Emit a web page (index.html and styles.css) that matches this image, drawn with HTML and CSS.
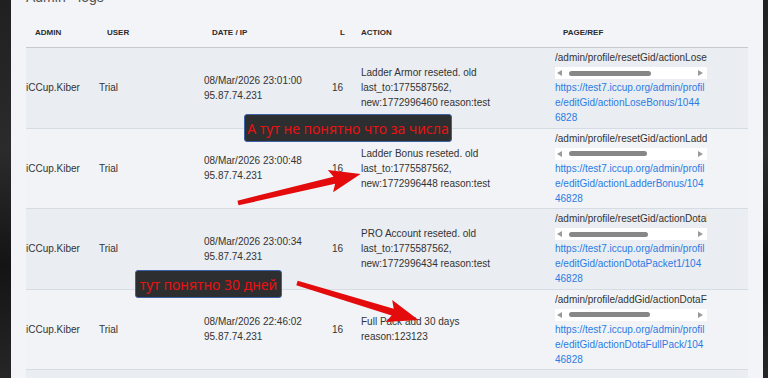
FILE: index.html
```html
<!DOCTYPE html>
<html lang="ru">
<head>
<meta charset="utf-8">
<title>Admin - logs</title>
<link rel="stylesheet" href="styles.css">
</head>
<body>
<div class="panel">
  <h1 class="title">Admin - logs</h1>
  <div class="table">
    <div class="row head">
      <div class="h">Admin</div>
      <div class="h">User</div>
      <div class="h">Date / IP</div>
      <div class="h">L</div>
      <div class="h h-action">Action</div>
      <div class="h">Page/Ref</div>
    </div>

    <div class="row data odd">
      <div class="c">iCCup.Kiber</div>
      <div class="c">Trial</div>
      <div class="c">08/Mar/2026 23:01:00<br>95.87.74.231</div>
      <div class="c">16</div>
      <div class="c action">Ladder Armor reseted. old last_to:1775587562, new:1772996460 reason:test</div>
      <div class="c page">
        <div class="path">/admin/profile/resetGid/actionLoseBonus/10446828</div>
        <div class="sbar"><span class="arr arr-l"></span><span class="thumb" style="width:82px"></span><span class="arr arr-r"></span></div>
        <a class="ref" href="#">https://test7.iccup.org/admin/profile/editGid/actionLoseBonus/10446828</a>
      </div>
    </div>

    <div class="row data even">
      <div class="c">iCCup.Kiber</div>
      <div class="c">Trial</div>
      <div class="c">08/Mar/2026 23:00:48<br>95.87.74.231</div>
      <div class="c">16</div>
      <div class="c action">Ladder Bonus reseted. old last_to:1775587562, new:1772996448 reason:test</div>
      <div class="c page">
        <div class="path">/admin/profile/resetGid/actionLadderBonus/10446828</div>
        <div class="sbar"><span class="arr arr-l"></span><span class="thumb" style="width:78px"></span><span class="arr arr-r"></span></div>
        <a class="ref" href="#">https://test7.iccup.org/admin/profile/editGid/actionLadderBonus/10446828</a>
      </div>
    </div>

    <div class="row data odd">
      <div class="c">iCCup.Kiber</div>
      <div class="c">Trial</div>
      <div class="c">08/Mar/2026 23:00:34<br>95.87.74.231</div>
      <div class="c">16</div>
      <div class="c action">PRO Account reseted. old last_to:1775587562, new:1772996434 reason:test</div>
      <div class="c page">
        <div class="path">/admin/profile/resetGid/actionDotaPacket1/10446828</div>
        <div class="sbar"><span class="arr arr-l"></span><span class="thumb" style="width:79px"></span><span class="arr arr-r"></span></div>
        <a class="ref" href="#">https://test7.iccup.org/admin/profile/editGid/actionDotaPacket1/10446828</a>
      </div>
    </div>

    <div class="row data even">
      <div class="c">iCCup.Kiber</div>
      <div class="c">Trial</div>
      <div class="c">08/Mar/2026 22:46:02<br>95.87.74.231</div>
      <div class="c">16</div>
      <div class="c action">Full Pack add 30 days reason:123123</div>
      <div class="c page">
        <div class="path">/admin/profile/addGid/actionDotaFullPack/10446828</div>
        <div class="sbar"><span class="arr arr-l"></span><span class="thumb" style="width:81px"></span><span class="arr arr-r"></span></div>
        <a class="ref" href="#">https://test7.iccup.org/admin/profile/editGid/actionDotaFullPack/10446828</a>
      </div>
    </div>

    <div class="row data odd">
      <div class="c">iCCup.Kiber</div>
      <div class="c">Trial</div>
      <div class="c">08/Mar/2026 22:40:11<br>95.87.74.231</div>
      <div class="c">16</div>
      <div class="c action">Full Pack add 30 days reason:123123</div>
      <div class="c page"></div>
    </div>
  </div>
</div>

<svg class="arrows" width="768" height="378" viewBox="0 0 768 378" aria-hidden="true">
  <polygon class="arrow" transform="translate(238 203) rotate(-13.3)" points="0,-2.4 99,-3.5 95,-11.5 126,0 95,11.5 99,3.5 0,2.4"/>
  <polygon class="arrow" transform="translate(297 283) rotate(16.9)" points="0,-2.4 100,-3.5 96,-11.5 127,0 96,11.5 100,3.5 0,2.4"/>
</svg>
<div class="note note-1">А тут не понятно что за числа</div>
<div class="note note-2">тут понятно 30 дней</div>
</body>
</html>
```

FILE: styles.css
```css
html, body {
  margin: 0;
  padding: 0;
}
body {
  width: 768px;
  height: 378px;
  overflow: hidden;
  position: relative;
  background: linear-gradient(180deg, #202020 0%, #2b2b2b 40%, #141414 70%, #262626 100%);
  font-family: "Liberation Sans", Arial, sans-serif;
  color: #333;
}
.panel {
  margin-left: 11px;
  width: 722px;
  height: 378px;
  padding: 0 15px;
  background: #f3f4f7;
  overflow: hidden;
}
.title {
  margin: -11px 0 3px;
  font-size: 14px;
  line-height: 16px;
  font-weight: normal;
  color: #555;
}
.row {
  display: grid;
  grid-template-columns: 73px 105px 128px 29px 194px 193px;
  align-items: center;
}
.head {
  padding: 19px 0 9px;
  line-height: 11px;
  border-bottom: 1px solid #c6cad0;
}
.h {
  font-size: 8px;
  font-weight: bold;
  text-transform: uppercase;
  color: #2b2b2b;
  padding-left: 8px;
}
.h:first-child {
  padding-left: 9px;
}
.h-action {
  padding-left: 0;
}
.data {
  padding: 2px 0 2.5px;
  border-bottom: 1px solid #d6dce4;
  font-size: 10px;
  line-height: 15px;
}
.odd {
  background: #eaedf1;
}
.even {
  background: #f1f3f6;
}
.action {
  width: 150px;
}
.page {
  width: 152px;
  min-height: 75px;
}
.path {
  white-space: nowrap;
  overflow: hidden;
}
.sbar {
  margin-top: 2px;
  height: 12px;
  background: #fff;
  display: flex;
  align-items: center;
}
.arr {
  width: 0;
  height: 0;
  border-top: 3.5px solid transparent;
  border-bottom: 3.5px solid transparent;
}
.arr-l {
  margin-left: 2px;
  border-right: 5px solid #9a9a9a;
}
.arr-r {
  margin-left: auto;
  margin-right: 4px;
  border-left: 5px solid #9a9a9a;
}
.thumb {
  margin-left: 7px;
  height: 5px;
  border-radius: 3px;
  background: #878787;
}
.ref {
  display: block;
  margin-top: 1px;
  width: 149.8px;
  word-break: break-all;
  color: #2a7ce4;
  text-decoration: none;
}
.arrows {
  position: absolute;
  left: 0;
  top: 0;
  pointer-events: none;
}
.arrow {
  fill: #e30b0b;
}
.note {
  position: absolute;
  box-sizing: border-box;
  height: 28px;
  display: flex;
  align-items: center;
  justify-content: center;
  background: #2c2e30;
  border: 1px solid #3d62a6;
  border-radius: 3px;
  color: #e81212;
  font-family: "Noto Sans", "Open Sans", sans-serif;
  font-size: 14px;
  white-space: nowrap;
}
.note-1 {
  left: 244px;
  top: 114px;
  width: 208px;
}
.note-2 {
  left: 135px;
  top: 270px;
  width: 147px;
}
```
